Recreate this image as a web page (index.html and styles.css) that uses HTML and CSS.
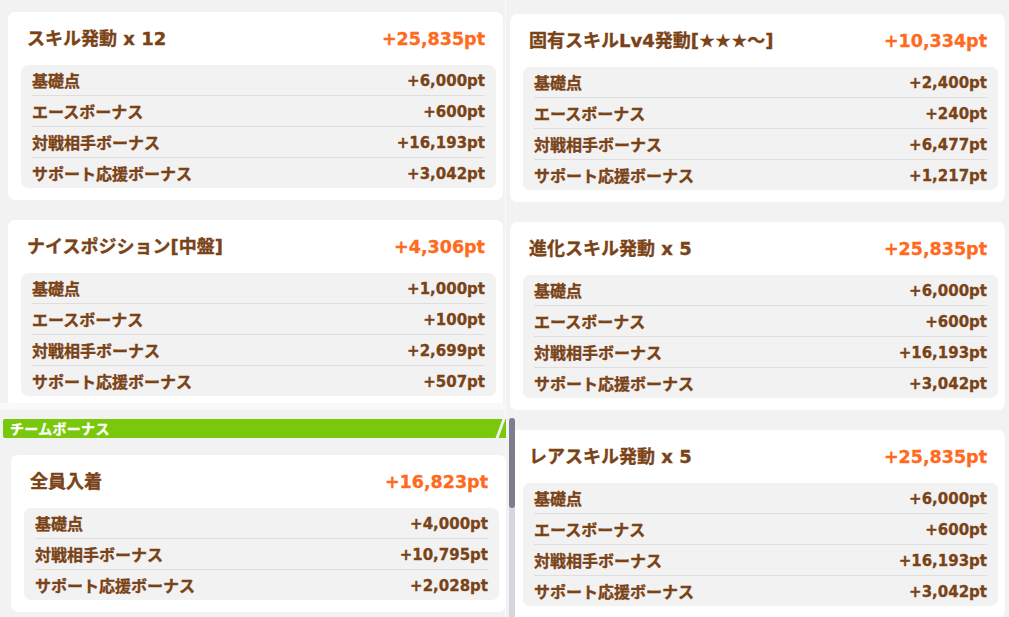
FILE: index.html
```html
<!DOCTYPE html>
<html lang="ja">
<head>
<meta charset="utf-8">
<title>ポイント内訳</title>
<link rel="stylesheet" href="styles.css">
</head>
<body>
<div class="page">
  <div class="col col-left">
    <div class="pane pane-a">
      <section class="card">
        <header class="card-head"><h2 class="card-title">スキル発動 x 12</h2><span class="card-total">+25,835pt</span></header>
        <div class="breakdown">
          <div class="row"><span class="label">基礎点</span><span class="value">+6,000pt</span></div>
          <div class="row"><span class="label">エースボーナス</span><span class="value">+600pt</span></div>
          <div class="row"><span class="label">対戦相手ボーナス</span><span class="value">+16,193pt</span></div>
          <div class="row"><span class="label">サポート応援ボーナス</span><span class="value">+3,042pt</span></div>
        </div>
      </section>
      <section class="card">
        <header class="card-head"><h2 class="card-title">ナイスポジション[中盤]</h2><span class="card-total">+4,306pt</span></header>
        <div class="breakdown">
          <div class="row"><span class="label">基礎点</span><span class="value">+1,000pt</span></div>
          <div class="row"><span class="label">エースボーナス</span><span class="value">+100pt</span></div>
          <div class="row"><span class="label">対戦相手ボーナス</span><span class="value">+2,699pt</span></div>
          <div class="row"><span class="label">サポート応援ボーナス</span><span class="value">+507pt</span></div>
        </div>
      </section>
    </div>
    <div class="pane pane-b">
      <div class="band"></div>
      <div class="team-banner"><span>チームボーナス</span></div>
      <section class="card card-team">
        <header class="card-head"><h2 class="card-title">全員入着</h2><span class="card-total">+16,823pt</span></header>
        <div class="breakdown">
          <div class="row"><span class="label">基礎点</span><span class="value">+4,000pt</span></div>
          <div class="row"><span class="label">対戦相手ボーナス</span><span class="value">+10,795pt</span></div>
          <div class="row"><span class="label">サポート応援ボーナス</span><span class="value">+2,028pt</span></div>
        </div>
      </section>
      <div class="scrollbar"><div class="thumb"></div></div>
    </div>
  </div>
  <div class="col col-right">
    <section class="card">
      <header class="card-head"><h2 class="card-title">固有スキルLv4発動[★★★～]</h2><span class="card-total">+10,334pt</span></header>
      <div class="breakdown">
        <div class="row"><span class="label">基礎点</span><span class="value">+2,400pt</span></div>
        <div class="row"><span class="label">エースボーナス</span><span class="value">+240pt</span></div>
        <div class="row"><span class="label">対戦相手ボーナス</span><span class="value">+6,477pt</span></div>
        <div class="row"><span class="label">サポート応援ボーナス</span><span class="value">+1,217pt</span></div>
      </div>
    </section>
    <section class="card">
      <header class="card-head"><h2 class="card-title">進化スキル発動 x 5</h2><span class="card-total">+25,835pt</span></header>
      <div class="breakdown">
        <div class="row"><span class="label">基礎点</span><span class="value">+6,000pt</span></div>
        <div class="row"><span class="label">エースボーナス</span><span class="value">+600pt</span></div>
        <div class="row"><span class="label">対戦相手ボーナス</span><span class="value">+16,193pt</span></div>
        <div class="row"><span class="label">サポート応援ボーナス</span><span class="value">+3,042pt</span></div>
      </div>
    </section>
    <section class="card">
      <header class="card-head"><h2 class="card-title">レアスキル発動 x 5</h2><span class="card-total">+25,835pt</span></header>
      <div class="breakdown">
        <div class="row"><span class="label">基礎点</span><span class="value">+6,000pt</span></div>
        <div class="row"><span class="label">エースボーナス</span><span class="value">+600pt</span></div>
        <div class="row"><span class="label">対戦相手ボーナス</span><span class="value">+16,193pt</span></div>
        <div class="row"><span class="label">サポート応援ボーナス</span><span class="value">+3,042pt</span></div>
      </div>
    </section>
  </div>
</div>
</body>
</html>
```

FILE: styles.css
```css
html, body {
  margin: 0;
  padding: 0;
  background: #f2f2f2;
  overflow: hidden;
}

.page {
  display: flex;
  width: 1009px;
  height: 617px;
  overflow: hidden;
  font-family: "Noto Sans CJK JP", "Noto Sans", sans-serif;
  color: #7a4317;
}

.col-left {
  width: 506px;
  flex: none;
  display: flex;
  flex-direction: column;
  border-right: 1px solid #fafafa;
  box-sizing: border-box;
}

.pane-a {
  height: 403px;
  flex: none;
  overflow: hidden;
  box-sizing: border-box;
  padding: 12px 0 0 8px;
  display: flex;
  flex-direction: column;
  gap: 20px;
}

.pane-b {
  flex: 1;
  position: relative;
  display: flex;
  flex-direction: column;
}

.band {
  height: 7px;
  background: #f9f9f9;
}

.team-banner {
  position: relative;
  margin: 9px 0 0 3px;
  width: 503px;
  height: 19px;
  background: #79c80b;
  border-radius: 2px 0 0 2px;
  padding-left: 7px;
  box-sizing: border-box;
  color: #ffffff;
  font-size: 14px;
  font-weight: 700;
  line-height: 19px;
  letter-spacing: 0.3px;
  -webkit-text-stroke: 0.3px #ffffff;
}

.team-banner::after {
  content: "";
  position: absolute;
  top: 0;
  bottom: 0;
  right: 4px;
  width: 3px;
  background: #f2f2f2;
  transform: skewX(-20deg);
}

.card-team {
  margin: 17px 0 0 11px;
}

.scrollbar {
  position: absolute;
  left: 509px;
  top: 15px;
  bottom: -4px;
  width: 6px;
  border-radius: 3px;
  background: #d6d6de;
}

.scrollbar .thumb {
  height: 90px;
  border-radius: 3px;
  background: #7e7d8e;
}

.col-right {
  flex: 1;
  box-sizing: border-box;
  padding: 14px 0 0 4px;
  display: flex;
  flex-direction: column;
  gap: 20px;
}

.card {
  flex: none;
  width: 495px;
  background: #ffffff;
  border-radius: 7px;
  padding-bottom: 12px;
  box-sizing: border-box;
}

.card-head {
  display: flex;
  justify-content: space-between;
  align-items: center;
  height: 53px;
  padding: 0 18px 0 19px;
  box-sizing: border-box;
}

.card-title {
  margin: 0;
  font-family: "DejaVu Sans", "Noto Sans CJK JP", sans-serif;
  font-size: 18px;
  font-weight: 700;
  line-height: 24px;
  color: #7a4317;
  -webkit-text-stroke: 0.35px #7a4317;
}

.card-total {
  font-family: "DejaVu Sans", sans-serif;
  font-size: 17.5px;
  font-weight: 700;
  line-height: 24px;
  color: #ff6a21;
  -webkit-text-stroke: 0.3px #ff6a21;
}

.breakdown {
  margin: 0 7px 0 13px;
  padding: 0 11px;
  background: #f2f2f2;
  border-radius: 7px;
}

.row {
  display: flex;
  justify-content: space-between;
  align-items: center;
  height: 30px;
}

.row + .row {
  border-top: 1px solid #dedede;
}

.label {
  font-size: 16px;
  font-weight: 700;
  line-height: 20px;
  padding-bottom: 1px;
  -webkit-text-stroke: 0.35px #7a4317;
}

.value {
  font-family: "DejaVu Sans", sans-serif;
  font-size: 15px;
  font-weight: 700;
  line-height: 20px;
  padding-top: 2px;
  -webkit-text-stroke: 0.3px #7a4317;
}
```
